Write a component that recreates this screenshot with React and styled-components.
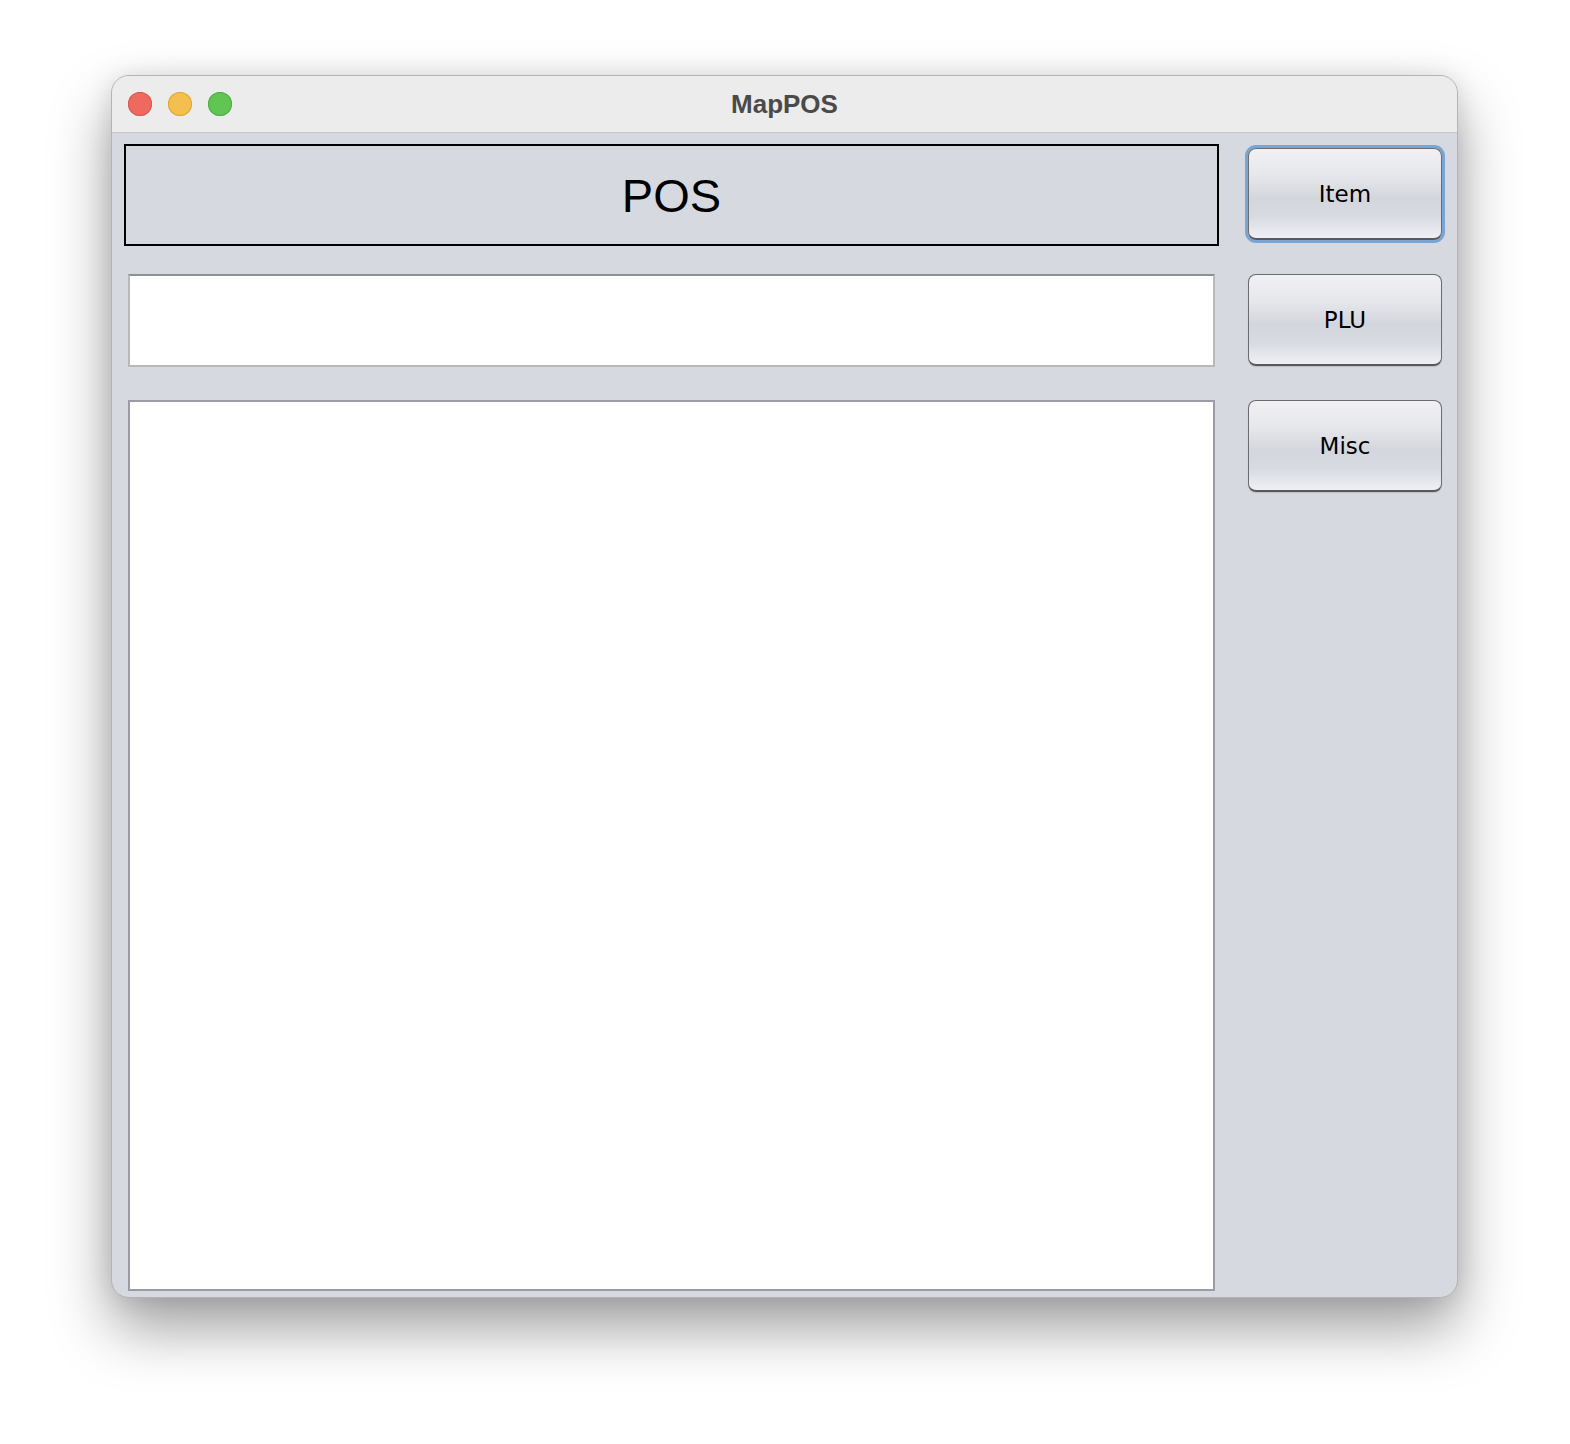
import React from 'react';
import styled, { createGlobalStyle } from 'styled-components';

const GlobalStyle = createGlobalStyle`
  html, body {
    margin: 0;
    padding: 0;
    background: #ffffff;
  }
`;

// Page holding the window, offset like the screenshot
const Page = styled.div`
  width: 1570px;
  height: 1444px;
  padding: 75px 0 0 111px;
  box-sizing: border-box;
  background: #ffffff;
`;

// macOS window frame
const Window = styled.div`
  width: 1347px;
  height: 1223px;
  border-radius: 18px;
  overflow: hidden;
  display: flex;
  flex-direction: column;
  background: #d6d9e0;
  border: 1px solid #b4b4b4;
  box-sizing: border-box;
  box-shadow: 0 30px 60px rgba(0, 0, 0, 0.38), 0 0 24px rgba(0, 0, 0, 0.1);
`;

const TitleBar = styled.div`
  height: 57px;
  flex-shrink: 0;
  display: flex;
  align-items: center;
  position: relative;
  background: #ececec;
  border-bottom: 1px solid #c6c6c6;
  box-sizing: border-box;
`;

const Lights = styled.div`
  display: flex;
  gap: 16px;
  padding-left: 16px;
`;

const Light = styled.span`
  width: 24px;
  height: 24px;
  border-radius: 50%;
  background: ${p => p.color};
  box-shadow: inset 0 0 0 1px ${p => p.edge};
`;

const Title = styled.div`
  position: absolute;
  left: 0;
  right: 0;
  text-align: center;
  font-family: "Liberation Sans", Arial, sans-serif;
  font-weight: bold;
  font-size: 26px;
  color: #4a4a4a;
  pointer-events: none;
`;

const Body = styled.div`
  flex: 1;
  display: flex;
  padding: 11px 15px 4px 12px;
  gap: 29px;
`;

const MainColumn = styled.div`
  flex: 1;
  display: flex;
  flex-direction: column;
`;

const Banner = styled.div`
  height: 102px;
  border: 2px solid #000;
  box-sizing: border-box;
  display: flex;
  align-items: center;
  justify-content: center;
  font-family: "Liberation Sans", Arial, sans-serif;
  font-size: 47px;
  color: #000;
`;

const Field = styled.div`
  margin: 28px 4px 0 4px;
  height: 93px;
  background: #ffffff;
  box-sizing: border-box;
  border: 2px solid #b9b9bc;
  border-top-color: #909094;
`;

const TextArea = styled.div`
  margin: 33px 4px 0 4px;
  height: 891px;
  background: #ffffff;
  box-sizing: border-box;
  border: 2px solid #9a9ba6;
`;

const Side = styled.div`
  width: 194px;
  display: flex;
  flex-direction: column;
  padding-top: 4px;
  gap: 34px;
`;

const Button = styled.div`
  width: 194px;
  height: 92px;
  box-sizing: border-box;
  border-radius: 8px;
  border: 1px solid #6c6c70;
  border-bottom: 2px solid #58585c;
  background: linear-gradient(
    to bottom,
    #f1f1f4 0%,
    #e6e7eb 30%,
    #d4d6dd 55%,
    #d8dae1 75%,
    #eff0f6 100%
  );
  display: flex;
  align-items: center;
  justify-content: center;
  font-family: "DejaVu Sans", Verdana, sans-serif;
  font-size: 23px;
  color: #000;
  box-shadow: ${p => (p.focused ? '0 0 0 3px #78a5d4' : '0 1px 1px rgba(0,0,0,0.12)')};
`;

export default function App() {
  return (
    <Page>
      <GlobalStyle />
      <Window>
        <TitleBar>
          <Lights>
            <Light color="#ee6a5f" edge="#d8574c" />
            <Light color="#f5bf4f" edge="#dca53a" />
            <Light color="#61c554" edge="#4ead43" />
          </Lights>
          <Title>MapPOS</Title>
        </TitleBar>
        <Body>
          <MainColumn>
            <Banner>POS</Banner>
            <Field />
            <TextArea />
          </MainColumn>
          <Side>
            <Button focused>Item</Button>
            <Button>PLU</Button>
            <Button>Misc</Button>
          </Side>
        </Body>
      </Window>
    </Page>
  );
}
